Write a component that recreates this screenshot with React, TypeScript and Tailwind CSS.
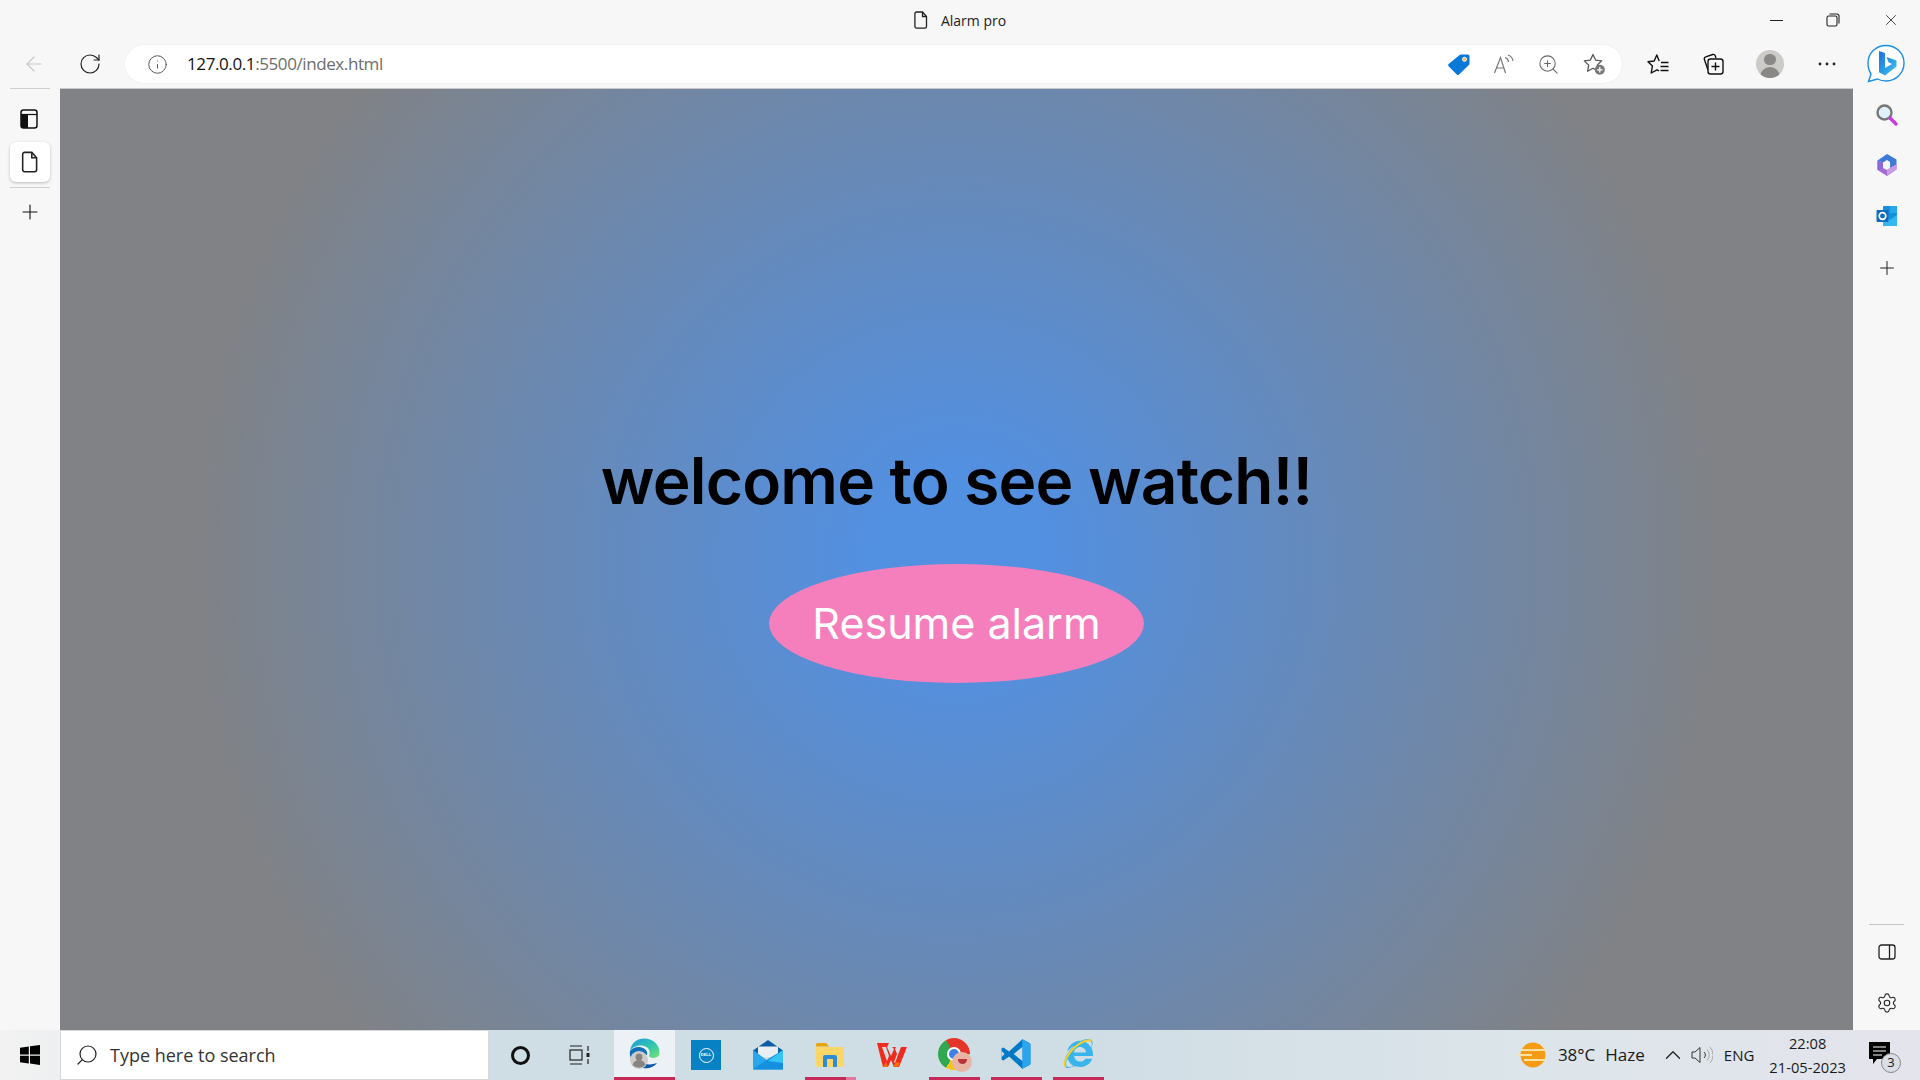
import { ArrowLeft, ChevronUp, Info, Plus, RotateCw, Search, Settings, X, ZoomIn } from 'lucide-react';
import { FaInternetExplorer } from 'react-icons/fa';

const UI_FONT = "font-['Open_Sans','Noto_Sans',sans-serif]";

const PageIcon = ({ size = 20 }: { size?: number }) => (
  <svg width={size} height={size} viewBox="0 0 20 20" fill="none" stroke="#222" strokeWidth="1.3">
    <path d="M5.5 2h6l4 4.5v10a1.6 1.6 0 0 1-1.6 1.6H5.5a1.6 1.6 0 0 1-1.6-1.6V3.6A1.6 1.6 0 0 1 5.5 2z" />
    <path d="M11.5 2v4.5h4" />
  </svg>
);

const TabsIcon = () => (
  <svg width="20" height="22" viewBox="0 0 20 22">
    <rect x="2" y="2" width="16" height="18" rx="2.5" fill="none" stroke="#111" strokeWidth="1.5" />
    <path d="M2 7h7v13H4.5A2.5 2.5 0 0 1 2 17.5z" fill="#111" />
    <path d="M2 6.5h16" stroke="#111" strokeWidth="1.2" />
  </svg>
);

const RestoreIcon = () => (
  <svg width="14" height="14" viewBox="0 0 14 14" fill="none" stroke="#222" strokeWidth="1.1">
    <rect x="1" y="3" width="10" height="10" rx="1.5" />
    <path d="M3.5 1h7.2A2.3 2.3 0 0 1 13 3.3v7.2" />
  </svg>
);

const TagIcon = () => (
  <svg width="24" height="24" viewBox="0 0 24 24">
    <path d="M14 2.5h7a1.5 1.5 0 0 1 1.5 1.5v7.5a2 2 0 0 1-.6 1.4L12 22.4a1.6 1.6 0 0 1-2.2 0L1.6 14.2a1.6 1.6 0 0 1 0-2.2L12.6 3a2 2 0 0 1 1.4-.5z" fill="#0a78d7" />
    <circle cx="17.5" cy="7.3" r="2.1" fill="#f2c14e" stroke="#fff" strokeWidth=".8" />
  </svg>
);

const ReadAloudIcon = () => (
  <svg width="22" height="22" viewBox="0 0 22 22" fill="none" stroke="#777" strokeWidth="1.2">
    <path d="M1.5 20 7.5 4.5 12.5 20M3.6 15h7.6" />
    <path d="M12 4.5c2 .6 3.4 2.4 3.6 4.5M15 2c2.6.9 4.6 3.2 5 6" />
  </svg>
);

const StarPlusIcon = () => (
  <svg width="24" height="24" viewBox="0 0 24 24">
    <path d="M11 2.5l2.6 5.6 6 .8-4.4 4.2 1.1 6.2-5.3-3-5.4 3 1.1-6.2L2.3 8.9l6-.8z" fill="none" stroke="#555" strokeWidth="1.3" strokeLinejoin="round" />
    <circle cx="17.8" cy="17.8" r="5" fill="#777" />
    <path d="M17.8 15v5.6M15 17.8h5.6" stroke="#fff" strokeWidth="1.3" />
  </svg>
);

const FavoritesIcon = () => (
  <svg width="22" height="22" viewBox="0 0 22 22" fill="none" stroke="#111" strokeWidth="1.4" strokeLinejoin="round">
    <path d="M12.2 8 9.8 2 7.2 8 1 8.8l4.400 4.300L4.200 20l5.800-3.200 2 1" />
    <path d="M14 9.500h7.500M13.500 13.500h8M13.500 17.500h8" />
  </svg>
);

const CollectionsIcon = () => (
  <svg width="22" height="22" viewBox="0 0 22 22" fill="none" stroke="#111" strokeWidth="1.4">
    <path d="M6 17 2.4 6.5a2 2 0 0 1 1.3-2.6l7-2.4a2 2 0 0 1 2.5 1.2L14 5" />
    <rect x="6" y="6" width="15" height="15" rx="2.5" fill="#f7f7f7" />
    <path d="M13.5 9.5v8M9.5 13.5h8" />
  </svg>
);

const ProfileIcon = () => (
  <div className="w-[28px] h-[28px] rounded-full bg-[#cdcbc8] overflow-hidden flex flex-col items-center">
    <div className="w-[12px] h-[12px] rounded-full bg-[#8a8886] mt-[4px]" />
    <div className="w-[20px] h-[12px] rounded-t-full bg-[#8a8886] mt-[2px]" />
  </div>
);

const DotsIcon = () => (
  <svg width="18" height="4" viewBox="0 0 18 4" fill="#222">
    <circle cx="2" cy="2" r="1.4" />
    <circle cx="9" cy="2" r="1.4" />
    <circle cx="16" cy="2" r="1.4" />
  </svg>
);

const BingIcon = () => (
  <svg width="40" height="40" viewBox="0 0 40 40">
    <defs>
      <linearGradient id="bingB" x1="0" y1="0" x2="1" y2="1">
        <stop offset="0" stopColor="#1b6fe0" />
        <stop offset="1" stopColor="#3ec6e8" />
      </linearGradient>
    </defs>
    <path d="M20 1.5C30 1.5 38 9 38 19s-8 18-18 18c-3 0-6-.7-8.500-2L2.500 37.500 5 30C3 27 2 23 2 19 2 9 10 1.500 20 1.500z" fill="#fff" stroke="#1b8fe8" strokeWidth="1.400" />
    <path d="M13 7l6 2v15l7-4-3.500-1.800-2-5.200 10 3.400v6L19 31.500l-6-3.300z" fill="url(#bingB)" />
  </svg>
);

const SearchColorIcon = () => (
  <svg width="24" height="24" viewBox="0 0 24 24">
    <circle cx="9.500" cy="9.500" r="7" fill="#dff0fa" stroke="#777" strokeWidth="2.400" />
    <path d="M15 15l6 6" stroke="#c43be0" strokeWidth="3.400" strokeLinecap="round" />
  </svg>
);

const CopilotIcon = () => (
  <svg width="22" height="24" viewBox="0 0 22 24">
    <path d="M11 1l9.500 5.500v5L14 15v-6l-3-2-4 2.500L1.500 7.500z" fill="#3d7bd8" />
    <path d="M1.500 7.500 7 9.500V15l4 2 3-2 6.500-3.500v5L11 23 1.500 17z" fill="#a56ad6" />
    <path d="M1.500 7.500 7 9.500V15l-5.500 2z" fill="#8c68d8" />
    <path d="M14 15l6.500-3.500v5L11 23v-6z" fill="#c89be6" />
    <circle cx="11" cy="12" r="3.200" fill="#f7f7f7" />
  </svg>
);

const OutlookIcon = () => (
  <svg width="22" height="22" viewBox="0 0 22 22">
    <rect x="7" y="1" width="14" height="20" rx="1" fill="#1490df" />
    <rect x="14" y="1" width="7" height="7" fill="#28a8ea" />
    <path d="M7 10l7 5 7-5v10a1 1 0 0 1-1 1H8a1 1 0 0 1-1-1z" fill="#35b8f1" />
    <rect x="0.500" y="5" width="12" height="12" rx="1" fill="#0f6cbd" />
    <circle cx="6.500" cy="11" r="3.300" fill="none" stroke="#fff" strokeWidth="1.700" />
  </svg>
);

const PanelIcon = () => (
  <svg width="18" height="16" viewBox="0 0 18 16" fill="none" stroke="#222" strokeWidth="1.300">
    <rect x="1" y="1" width="16" height="14" rx="2.500" />
    <path d="M11.500 1v14" />
  </svg>
);

const WindowsIcon = () => (
  <svg width="20" height="20" viewBox="0 0 20 20" fill="#000">
    <path d="M0 2.800 8.800 1.500v8H0zM10 1.300 20 0v9.500H10zM0 10.700h8.800v7.800L0 17.200zM10 10.700h10V20l-10-1.400z" />
  </svg>
);

const TaskViewIcon = () => (
  <svg width="22" height="20" viewBox="0 0 22 20" fill="none" stroke="#222" strokeWidth="1.200">
    <path d="M1 1h12M1 19h12" />
    <rect x="1" y="5" width="12" height="10" />
    <path d="M19 1v5M19 14v5" />
    <rect x="17.500" y="8" width="3" height="4" fill="#222" stroke="none" />
  </svg>
);

const EdgeIcon = () => (
  <svg width="32" height="32" viewBox="0 0 32 32">
    <defs>
      <linearGradient id="edgeTop" x1="0" y1="0" x2="1" y2="1">
        <stop offset="0" stopColor="#1a9ce0" />
        <stop offset="0.6" stopColor="#36c9a8" />
        <stop offset="1" stopColor="#7fe36a" />
      </linearGradient>
    </defs>
    <path d="M1 13C2 5 8 0.500 15.500 0.500 24 0.500 31 7 30.500 15c0 3.500-3 5-6.500 5-2.500 0-4-1-4-2.500C21.500 15 21 9.500 15 8 9 6.500 3.500 9 1 13z" fill="url(#edgeTop)" />
    <path d="M1 13c3-4 9-5 13-3 3 1.500 5 4 4 7H6a9 9 0 0 0 2 9C3 24 0 19 1 13z" fill="#0f6fb8" />
    <path d="M14 30c6 1 11-1 14-5-4 1.500-9 2-12 .5z" fill="#0c59a4" />
    <circle cx="10" cy="22" r="9" fill="#cfcdca" />
    <circle cx="10" cy="19" r="3.500" fill="#878583" />
    <path d="M3.500 27c1-3.500 3.500-5 6.500-5s5.500 1.500 6.500 5a9 9 0 0 1-13 0z" fill="#878583" />
  </svg>
);

const DellIcon = () => (
  <div className="w-[30px] h-[30px] bg-[#0681c4] flex items-center justify-center">
    <div className="w-[15px] h-[15px] rounded-full border border-white flex items-center justify-center text-white text-[4px] font-bold font-['Liberation_Sans',sans-serif]">
      DELL
    </div>
  </div>
);

const MailIcon = () => (
  <svg width="30" height="30" viewBox="0 0 30 30">
    <path d="M15 0 30 10.500V14H0v-3.500z" fill="#0f5fa6" />
    <path d="M5 6.500h20V17H5z" fill="#e8eef2" />
    <path d="M0 10 15 21 30 10v18.500a1 1 0 0 1-1 1H1a1 1 0 0 1-1-1z" fill="#28a8ea" />
    <path d="M0 29 15 19 30 10v19.500H1z" fill="#1490df" />
    <path d="M15 21 30 10v13z" fill="#35c4f5" />
  </svg>
);

const FolderIcon = () => (
  <svg width="28" height="24" viewBox="0 0 28 24">
    <path d="M0 1.500A1.500 1.500 0 0 1 1.500 0H10l3 3.500H0z" fill="#e8a500" />
    <path d="M0 4h28v18.500a1.500 1.500 0 0 1-1.500 1.500h-25A1.500 1.500 0 0 1 0 22.500z" fill="#fcd768" />
    <path d="M7 24V14a2 2 0 0 1 2-2h10a2 2 0 0 1 2 2v10h-4v-8h-6v8z" fill="#2d8bd8" />
  </svg>
);

const WpsIcon = () => (
  <svg width="30" height="24" viewBox="0 0 30 24">
    <path d="M0 0h12l-2 4 4 9 3-7-2-2h15l-8 20h-5l-3-7-3 7H6zM5 4l5 14 2-5-3-9zM19 4l-1 2 2 5-3 8 1 1 6-16z" fill="#ef2b1f" fillRule="evenodd" />
    <path d="M6 24 9 19l2 5zM16 24l3-5 4 1-2 4z" fill="#ff6a00" />
  </svg>
);

const ChromeIcon = () => (
  <div className="w-[32px] h-[32px] rounded-full bg-[conic-gradient(#e5352b_0deg_90deg,#f5c518_90deg_210deg,#2fa84f_210deg_330deg,#e5352b_330deg_360deg)] flex items-center justify-center relative">
    <div className="w-[14px] h-[14px] rounded-full bg-[#3f7fe8] border-2 border-white" />
    <div className="absolute right-[-2px] bottom-[-2px] w-[20px] h-[20px] rounded-full bg-[#e8b5a5] flex items-center justify-center">
      <div className="w-[9px] h-[5px] rounded-b-full bg-[#b8333a]" />
    </div>
  </div>
);

const VsCodeIcon = () => (
  <svg width="30" height="30" viewBox="0 0 100 100">
    <path d="M71 99 95 87a5 5 0 0 0 3-4.500V17.500a5 5 0 0 0-3-4.500L71 1 27 42 8 28l-6 3v38l6 3 19-14z" fill="#0078c8" />
    <path d="M71 1 95 13a5 5 0 0 1 3 4.500v65a5 5 0 0 1-3 4.500L71 99z" fill="#2ba5ee" />
    <path d="M71 27 42 50l29 23z" fill="#cfdde4" />
    <path d="M2 40 12 50 2 60z" fill="#cfdde4" />
  </svg>
);

const IeIcon = () => (
  <div className="w-[30px] h-[30px] flex items-center justify-center relative">
    <FaInternetExplorer size={29} color="#39b4ec" />
    <svg className="absolute left-0 top-0" width="30" height="30" viewBox="0 0 30 30" fill="none">
      <path d="M3 28C-1 26 4 15 12 8 19 2 26 0 28 2" stroke="#f4cf2a" strokeWidth="2" />
    </svg>
  </div>
);

const WeatherIcon = () => (
  <svg width="30" height="26" viewBox="0 0 30 26">
    <circle cx="16" cy="13" r="12.500" fill="#f59b14" />
    <path d="M4 8h24M1 13h14M7 18h22" stroke="#fbe3a8" strokeWidth="2" />
  </svg>
);

const SpeakerIcon = () => (
  <svg width="22" height="20" viewBox="0 0 22 20" fill="none" stroke="#333" strokeWidth="1">
    <path d="M1 7v6h3l5 4.500v-15L4 7z" />
    <path d="M13 7a4 4 0 0 1 0 6" />
    <path d="M16 4.500a8 8 0 0 1 0 11M19 2a12 12 0 0 1 0 16" stroke="#aaa" />
  </svg>
);

const TaskbarApp = ({
  children,
  bar = 'none',
}: {
  children: React.ReactNode;
  bar?: 'none' | 'full' | 'split';
}) => (
  <div className="w-[62px] h-full flex justify-center shrink-0">
    <div
      className={
        bar === 'full'
          ? 'w-[51px] h-full flex items-center justify-center border-b-[3px] border-[#c72a58]'
          : bar === 'split'
            ? 'w-[51px] h-full flex items-center justify-center bg-[linear-gradient(to_right,#c72a58_41px,#e07a9b_41px)] bg-no-repeat bg-bottom bg-[size:100%_3px]'
            : 'w-[51px] h-full flex items-center justify-center'
      }
    >
      {children}
    </div>
  </div>
);

export default function App() {
  return (
    <div className={`w-[1920px] h-[1080px] overflow-hidden flex flex-col bg-[#f7f7f7] ${UI_FONT}`}>
      {/* title bar */}
      <div className="h-[45px] shrink-0 flex items-center">
        <div className="flex-1 flex items-center justify-center gap-[10px] pl-[147px] pb-[5px]">
          <PageIcon />
          <span className="text-[14px] text-[#222]">Alarm pro</span>
        </div>
        <div className="flex items-center w-[150px] pr-[20px] justify-between pb-[5px]">
          <div className="w-[13px] h-px bg-[#222]" />
          <RestoreIcon />
          <X size={18} strokeWidth={1.1} color="#222" />
        </div>
      </div>

      {/* toolbar */}
      <div className="h-[43px] shrink-0 flex items-start pl-[22px]">
        <div className="w-[24px] h-[38px] flex items-center justify-center">
          <ArrowLeft size={24} strokeWidth={1.1} color="#c8c8c8" />
        </div>
        <div className="w-[24px] h-[38px] ml-[32px] flex items-center justify-center">
          <RotateCw size={24} strokeWidth={1.2} color="#222" />
        </div>
        <div className="w-[1497px] h-[38px] ml-[23px] rounded-full bg-white shadow-[0_0_2px_rgba(0,0,0,0.08)] flex items-center pl-[22px] pr-[16px]">
          <Info size={21} strokeWidth={1.1} color="#555" />
          <span className="ml-[19px] text-[17px] tracking-[-0.4px] text-[#111]">
            127.0.0.1<span className="text-[#6d6d6d]">:5500/index.html</span>
          </span>
          <div className="ml-auto flex items-center gap-[22px]">
            <TagIcon />
            <ReadAloudIcon />
            <ZoomIn size={23} strokeWidth={1.1} color="#666" />
            <StarPlusIcon />
          </div>
        </div>
        <div className="h-[38px] flex items-center ml-[25px]">
          <FavoritesIcon />
          <div className="ml-[33px]">
            <CollectionsIcon />
          </div>
          <div className="ml-[32px]">
            <ProfileIcon />
          </div>
          <div className="ml-[34px]">
            <DotsIcon />
          </div>
          <div className="ml-[30px]">
            <BingIcon />
          </div>
        </div>
      </div>

      {/* browser body */}
      <div className="flex-1 min-h-0 flex">
        <div className="w-[60px] shrink-0 flex flex-col items-center">
          <div className="w-[40px] h-px bg-[#cfcfcf] shrink-0" />
          <div className="h-[53px] pt-[7px] pr-[2px] flex items-center justify-center">
            <TabsIcon />
          </div>
          <div className="w-[40px] h-[40px] rounded-md bg-white shadow-[0_1px_3px_rgba(0,0,0,0.25)] flex items-center justify-center">
            <PageIcon size={24} />
          </div>
          <div className="w-[40px] h-px bg-[#cfcfcf] mt-[5px]" />
          <div className="mt-[12px]">
            <Plus size={24} strokeWidth={1.1} color="#111" />
          </div>
        </div>

        <main className="flex-1 min-w-0 flex flex-col items-center pt-[352px] border-t border-[#c8c8c8] bg-[radial-gradient(circle_at_center,#5290e2_80px,#808286_760px)]">
          <h1 className="text-[64px] leading-[80px] font-semibold tracking-[-0.8px] text-black font-['Inter',sans-serif]">
            welcome to see watch!!
          </h1>
          <button className="mt-[43px] w-[375px] h-[119px] rounded-[50%] bg-[#f57fbc] text-white text-[43px] font-['Inter',sans-serif]">
            Resume alarm
          </button>
        </main>

        <div className="w-[67px] shrink-0 flex flex-col items-center pt-[15px]">
          <SearchColorIcon />
          <div className="mt-[26px]">
            <CopilotIcon />
          </div>
          <div className="mt-[28px]">
            <OutlookIcon />
          </div>
          <div className="mt-[30px]">
            <Plus size={22} strokeWidth={1.1} color="#222" />
          </div>
          <div className="mt-auto w-[35px] h-px bg-[#c4c4c4]" />
          <div className="mt-[19px]">
            <PanelIcon />
          </div>
          <div className="mt-[32px] mb-[16px]">
            <Settings size={22} strokeWidth={1.2} color="#222" />
          </div>
        </div>
      </div>

      {/* windows taskbar */}
      <div className="h-[50px] shrink-0 flex items-stretch text-[#1a1a1a] bg-[linear-gradient(to_right,#f2f2f2_0%,#cfdde4_25%,#cfdde4_55%,#dce5ea_80%,#e4e4ec_100%)]">
        <div className="w-[60px] flex items-center justify-center">
          <WindowsIcon />
        </div>
        <div className="w-[429px] bg-white border border-[#d8d8d8] flex items-center pl-[14px]">
          <Search size={24} strokeWidth={1.2} color="#222" className="-scale-x-100" />
          <span className="ml-[11px] text-[18px] text-[#333]">Type here to search</span>
        </div>
        <div className="w-[62px] flex items-center justify-center">
          <div className="w-[19px] h-[19px] rounded-full border-[3px] border-[#111]" />
        </div>
        <div className="w-[63px] pr-[5px] flex items-center justify-center">
          <TaskViewIcon />
        </div>
        <div className="w-[61px] flex items-center justify-center border-b-[3px] border-[#c72a58] bg-[#ebf1f4]">
          <EdgeIcon />
        </div>
        <TaskbarApp>
          <DellIcon />
        </TaskbarApp>
        <TaskbarApp>
          <MailIcon />
        </TaskbarApp>
        <TaskbarApp bar="split">
          <FolderIcon />
        </TaskbarApp>
        <TaskbarApp>
          <WpsIcon />
        </TaskbarApp>
        <TaskbarApp bar="full">
          <ChromeIcon />
        </TaskbarApp>
        <TaskbarApp bar="full">
          <VsCodeIcon />
        </TaskbarApp>
        <TaskbarApp bar="full">
          <IeIcon />
        </TaskbarApp>

        <div className="ml-auto flex items-center">
          <WeatherIcon />
          <span className="ml-[11px] text-[17px]">38°C</span>
          <span className="ml-[10px] text-[17px]">Haze</span>
          <ChevronUp size={26} strokeWidth={1.2} color="#222" className="ml-[15px]" />
          <div className="ml-[5px]">
            <SpeakerIcon />
          </div>
          <span className="ml-[11px] text-[15px]">ENG</span>
          <div className="ml-[15px] flex flex-col items-center leading-[24px] text-[14.700px]">
            <span>22:08</span>
            <span>21-05-2023</span>
          </div>
          <div className="ml-[23px] mr-[27px] relative w-[24px] h-[30px]">
            <svg width="22" height="24" viewBox="0 0 22 24" className="mt-[2px]">
              <path d="M0 0h21v17H8l-4 5v-5H0z" fill="#000" />
              <path d="M4 5h13M4 9h13M4 13h9" stroke="#fff" strokeWidth="1.200" />
            </svg>
            <div className="absolute right-[-8px] bottom-[-3px] w-[20px] h-[20px] rounded-full border border-[#888] bg-[#d9dfe5] flex items-center justify-center text-[13px]">
              3
            </div>
          </div>
        </div>
      </div>
    </div>
  );
}
